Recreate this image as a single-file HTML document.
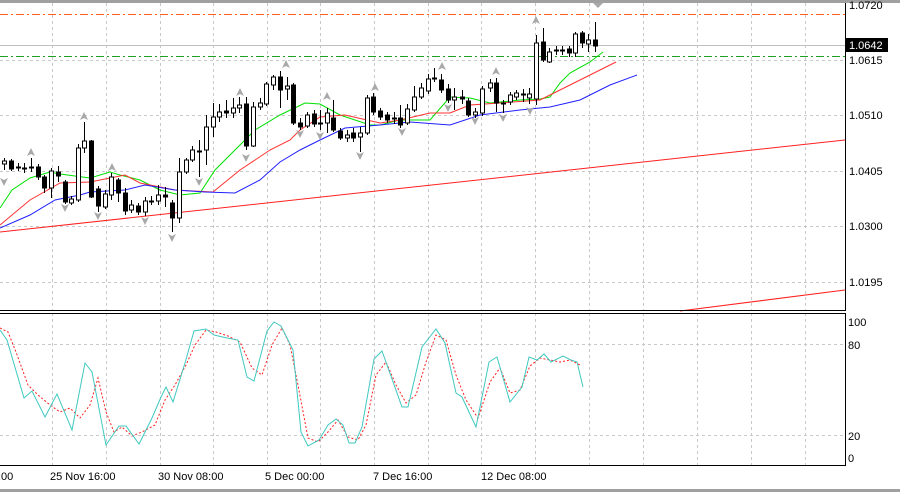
<!DOCTYPE html>
<html><head><style>
html,body{margin:0;padding:0;background:#fff;width:900px;height:492px;overflow:hidden}
svg text{font-family:"Liberation Sans",sans-serif;font-size:11px;fill:#000}
</style></head><body>
<svg width="900" height="492" viewBox="0 0 900 492" xmlns="http://www.w3.org/2000/svg">
<rect x="0" y="0" width="900" height="492" fill="#fff"/>
<rect x="0" y="0" width="900" height="3" fill="#a0a0a0"/>
<g stroke="#c8c8c8" stroke-dasharray="3,3" stroke-width="1">
<line x1="52.5" y1="3" x2="52.5" y2="310"/><line x1="106.5" y1="3" x2="106.5" y2="310"/><line x1="160.5" y1="3" x2="160.5" y2="310"/><line x1="213.5" y1="3" x2="213.5" y2="310"/><line x1="267.5" y1="3" x2="267.5" y2="310"/><line x1="320.5" y1="3" x2="320.5" y2="310"/><line x1="374.5" y1="3" x2="374.5" y2="310"/><line x1="428.5" y1="3" x2="428.5" y2="310"/><line x1="481.5" y1="3" x2="481.5" y2="310"/><line x1="535.5" y1="3" x2="535.5" y2="310"/><line x1="589.5" y1="3" x2="589.5" y2="310"/><line x1="643.5" y1="3" x2="643.5" y2="310"/><line x1="697.5" y1="3" x2="697.5" y2="310"/><line x1="751.5" y1="3" x2="751.5" y2="310"/><line x1="805.5" y1="3" x2="805.5" y2="310"/>
<line x1="52.5" y1="313" x2="52.5" y2="465"/><line x1="106.5" y1="313" x2="106.5" y2="465"/><line x1="160.5" y1="313" x2="160.5" y2="465"/><line x1="213.5" y1="313" x2="213.5" y2="465"/><line x1="267.5" y1="313" x2="267.5" y2="465"/><line x1="320.5" y1="313" x2="320.5" y2="465"/><line x1="374.5" y1="313" x2="374.5" y2="465"/><line x1="428.5" y1="313" x2="428.5" y2="465"/><line x1="481.5" y1="313" x2="481.5" y2="465"/><line x1="535.5" y1="313" x2="535.5" y2="465"/><line x1="589.5" y1="313" x2="589.5" y2="465"/><line x1="643.5" y1="313" x2="643.5" y2="465"/><line x1="697.5" y1="313" x2="697.5" y2="465"/><line x1="751.5" y1="313" x2="751.5" y2="465"/><line x1="805.5" y1="313" x2="805.5" y2="465"/>
<line x1="0" y1="115.5" x2="845" y2="115.5"/><line x1="0" y1="171.5" x2="845" y2="171.5"/><line x1="0" y1="226.5" x2="845" y2="226.5"/><line x1="0" y1="282.5" x2="845" y2="282.5"/><line x1="0" y1="60.5" x2="845" y2="60.5"/>
<line x1="0" y1="344.5" x2="845" y2="344.5"/><line x1="0" y1="435.5" x2="845" y2="435.5"/>
</g>
<line x1="0" y1="45.5" x2="845" y2="45.5" stroke="#c0c0c0"/>
<line x1="0" y1="14.5" x2="845" y2="14.5" stroke="#ff6020" stroke-dasharray="8,3,2,3"/>
<line x1="0" y1="56.5" x2="845" y2="56.5" stroke="#20a020" stroke-dasharray="8,3,2,3"/>
<line x1="0" y1="232" x2="845" y2="140" stroke="#ff2020"/>
<line x1="680" y1="311" x2="845" y2="290" stroke="#ff2020"/>
<polyline fill="none" stroke="#00e000" points="0,208 12,190 30,178 50,172 60,174 90,178 110,172 120,175 140,180 160,190 180,195 200,193 215,170 235,150 255,130 280,115 305,103 320,104 340,115 370,125 380,125 400,120 430,120 450,97 470,98 490,103 520,100 540,99 550,97 560,83 570,73 590,62 603,52"/>
<polyline fill="none" stroke="#ff3030" points="0,225 30,200 60,183 90,182 125,175 140,183 175,190 213,192 240,170 270,150 290,140 300,130 320,117 345,115 380,123 400,120 430,113 450,113 470,105 500,103 540,100 570,85 600,70 616,62"/>
<polyline fill="none" stroke="#2020ff" points="0,228 30,215 55,200 80,195 90,192 125,190 145,185 175,190 205,192 235,193 260,180 280,162 300,150 320,140 345,128 380,125 410,122 450,125 480,115 520,110 550,107 580,100 610,85 637,75"/>
<g id="candles" stroke="#000" stroke-width="1">
<!-- x, body top, body bottom, wick top, wick bottom, fill -->
<line x1="4.5" y1="158" x2="4.5" y2="170"/><rect x="2.5" y="161" width="4" height="3" fill="#fff"/>
<line x1="11.5" y1="159" x2="11.5" y2="171"/><rect x="9.5" y="161" width="4" height="8" fill="#000"/>
<line x1="18.5" y1="163" x2="18.5" y2="171"/><rect x="16.5" y="167" width="4" height="1" fill="#000"/>
<line x1="24.5" y1="163" x2="24.5" y2="173"/><rect x="22.5" y="168" width="4" height="1" fill="#000"/>
<line x1="31.5" y1="158" x2="31.5" y2="172"/><rect x="29.5" y="167" width="4" height="1" fill="#000"/>
<line x1="38.5" y1="164" x2="38.5" y2="180"/><rect x="36.5" y="167" width="4" height="10" fill="#000"/>
<line x1="44.5" y1="175" x2="44.5" y2="193"/><rect x="42.5" y="177" width="4" height="11" fill="#000"/>
<line x1="51.5" y1="168" x2="51.5" y2="198"/><rect x="49.5" y="171" width="4" height="17" fill="#fff"/>
<line x1="58.5" y1="166" x2="58.5" y2="182"/><rect x="56.5" y="172" width="4" height="4" fill="#000"/>
<line x1="65.5" y1="180" x2="65.5" y2="204"/><rect x="63.5" y="182" width="4" height="20" fill="#000"/>
<line x1="71.5" y1="196" x2="71.5" y2="205"/><rect x="69.5" y="199" width="4" height="4" fill="#fff"/>
<line x1="78.5" y1="144" x2="78.5" y2="202"/><rect x="76.5" y="148" width="4" height="52" fill="#fff"/>
<line x1="84.5" y1="122" x2="84.5" y2="153"/><rect x="82.5" y="141" width="4" height="7" fill="#fff"/>
<line x1="91.5" y1="140" x2="91.5" y2="198"/><rect x="89.5" y="141" width="4" height="56" fill="#000"/>
<line x1="98.5" y1="186" x2="98.5" y2="212"/><rect x="96.5" y="189" width="4" height="17" fill="#000"/>
<line x1="105.5" y1="190" x2="105.5" y2="209"/><rect x="103.5" y="194" width="4" height="13" fill="#fff"/>
<line x1="111.5" y1="173" x2="111.5" y2="200"/><rect x="109.5" y="177" width="4" height="18" fill="#fff"/>
<line x1="118.5" y1="178" x2="118.5" y2="202"/><rect x="116.5" y="180" width="4" height="13" fill="#000"/>
<line x1="125.5" y1="188" x2="125.5" y2="215"/><rect x="123.5" y="193" width="4" height="18" fill="#000"/>
<line x1="131.5" y1="200" x2="131.5" y2="213"/><rect x="129.5" y="205" width="4" height="5" fill="#fff"/>
<line x1="138.5" y1="203" x2="138.5" y2="215"/><rect x="136.5" y="206" width="4" height="6" fill="#000"/>
<line x1="145.5" y1="197" x2="145.5" y2="216"/><rect x="143.5" y="201" width="4" height="11" fill="#fff"/>
<line x1="151.5" y1="196" x2="151.5" y2="205"/><rect x="149.5" y="201" width="4" height="1" fill="#000"/>
<line x1="158.5" y1="185" x2="158.5" y2="205"/><rect x="156.5" y="195" width="4" height="6" fill="#fff"/>
<line x1="165.5" y1="187" x2="165.5" y2="207"/><rect x="163.5" y="195" width="4" height="2" fill="#000"/>
<line x1="172.5" y1="200" x2="172.5" y2="232"/><rect x="170.5" y="203" width="4" height="15" fill="#000"/>
<line x1="179.5" y1="158" x2="179.5" y2="223"/><rect x="177.5" y="172" width="4" height="46" fill="#fff"/>
<line x1="186.5" y1="158" x2="186.5" y2="174"/><rect x="184.5" y="160" width="4" height="12" fill="#fff"/>
<line x1="192.5" y1="146" x2="192.5" y2="162"/><rect x="190.5" y="150" width="4" height="10" fill="#fff"/>
<line x1="199.5" y1="140" x2="199.5" y2="177"/><rect x="197.5" y="151" width="4" height="1" fill="#000"/>
<line x1="206.5" y1="115" x2="206.5" y2="165"/><rect x="204.5" y="127" width="4" height="23" fill="#fff"/>
<line x1="213.5" y1="103" x2="213.5" y2="137"/><rect x="211.5" y="117" width="4" height="10" fill="#fff"/>
<line x1="219.5" y1="104" x2="219.5" y2="122"/><rect x="217.5" y="112" width="4" height="5" fill="#fff"/>
<line x1="226.5" y1="100" x2="226.5" y2="118"/><rect x="224.5" y="111" width="4" height="2" fill="#000"/>
<line x1="233.5" y1="98" x2="233.5" y2="118"/><rect x="231.5" y="108" width="4" height="5" fill="#fff"/>
<line x1="239.5" y1="97" x2="239.5" y2="113"/><rect x="237.5" y="105" width="4" height="3" fill="#fff"/>
<line x1="246.5" y1="97" x2="246.5" y2="150"/><rect x="244.5" y="104" width="4" height="42" fill="#000"/>
<line x1="253.5" y1="102" x2="253.5" y2="147"/><rect x="251.5" y="107" width="4" height="39" fill="#fff"/>
<line x1="260.5" y1="98" x2="260.5" y2="110"/><rect x="258.5" y="103" width="4" height="4" fill="#fff"/>
<line x1="266.5" y1="82" x2="266.5" y2="106"/><rect x="264.5" y="84" width="4" height="20" fill="#fff"/>
<line x1="273.5" y1="75" x2="273.5" y2="90"/><rect x="271.5" y="77" width="4" height="8" fill="#fff"/>
<line x1="280.5" y1="71" x2="280.5" y2="108"/><rect x="278.5" y="77" width="4" height="13" fill="#000"/>
<line x1="287.5" y1="77" x2="287.5" y2="100"/><rect x="285.5" y="86" width="4" height="3" fill="#fff"/>
<line x1="293.5" y1="83" x2="293.5" y2="125"/><rect x="291.5" y="85" width="4" height="38" fill="#000"/>
<line x1="300.5" y1="118" x2="300.5" y2="130"/><rect x="298.5" y="123" width="4" height="4" fill="#000"/>
<line x1="307.5" y1="112" x2="307.5" y2="128"/><rect x="305.5" y="115" width="4" height="11" fill="#fff"/>
<line x1="314.5" y1="110" x2="314.5" y2="127"/><rect x="312.5" y="114" width="4" height="10" fill="#000"/>
<line x1="320.5" y1="110" x2="320.5" y2="130"/><rect x="318.5" y="123" width="4" height="1" fill="#000"/>
<line x1="327.5" y1="108" x2="327.5" y2="133"/><rect x="325.5" y="113" width="4" height="10" fill="#fff"/>
<line x1="333.5" y1="100" x2="333.5" y2="132"/><rect x="331.5" y="118" width="4" height="12" fill="#000"/>
<line x1="340.5" y1="128" x2="340.5" y2="140"/><rect x="338.5" y="131" width="4" height="7" fill="#000"/>
<line x1="347.5" y1="130" x2="347.5" y2="142"/><rect x="345.5" y="135" width="4" height="3" fill="#fff"/>
<line x1="353.5" y1="128" x2="353.5" y2="142"/><rect x="351.5" y="133" width="4" height="5" fill="#000"/>
<line x1="360.5" y1="127" x2="360.5" y2="152"/><rect x="358.5" y="133" width="4" height="4" fill="#fff"/>
<line x1="367.5" y1="95" x2="367.5" y2="135"/><rect x="365.5" y="98" width="4" height="35" fill="#fff"/>
<line x1="373.5" y1="93" x2="373.5" y2="115"/><rect x="371.5" y="97" width="4" height="15" fill="#000"/>
<line x1="380.5" y1="108" x2="380.5" y2="120"/><rect x="378.5" y="111" width="4" height="6" fill="#000"/>
<line x1="387.5" y1="112" x2="387.5" y2="123"/><rect x="385.5" y="115" width="4" height="5" fill="#000"/>
<line x1="394.5" y1="112" x2="394.5" y2="124"/><rect x="392.5" y="118" width="4" height="1" fill="#000"/>
<line x1="400.5" y1="105" x2="400.5" y2="128"/><rect x="398.5" y="118" width="4" height="7" fill="#000"/>
<line x1="407.5" y1="104" x2="407.5" y2="125"/><rect x="405.5" y="109" width="4" height="14" fill="#fff"/>
<line x1="414.5" y1="86" x2="414.5" y2="112"/><rect x="412.5" y="97" width="4" height="13" fill="#fff"/>
<line x1="421.5" y1="83" x2="421.5" y2="99"/><rect x="419.5" y="88" width="4" height="9" fill="#fff"/>
<line x1="428.5" y1="74" x2="428.5" y2="94"/><rect x="426.5" y="79" width="4" height="12" fill="#fff"/>
<line x1="434.5" y1="68" x2="434.5" y2="82"/><rect x="432.5" y="78" width="4" height="1" fill="#000"/>
<line x1="441.5" y1="74" x2="441.5" y2="93"/><rect x="439.5" y="80" width="4" height="10" fill="#000"/>
<line x1="448.5" y1="84" x2="448.5" y2="103"/><rect x="446.5" y="89" width="4" height="11" fill="#000"/>
<line x1="454.5" y1="88" x2="454.5" y2="110"/><rect x="452.5" y="97" width="4" height="3" fill="#fff"/>
<line x1="462.5" y1="90" x2="462.5" y2="104"/><rect x="460.5" y="97" width="4" height="2" fill="#000"/>
<line x1="468.5" y1="98" x2="468.5" y2="117"/><rect x="466.5" y="101" width="4" height="14" fill="#000"/>
<line x1="475.5" y1="108" x2="475.5" y2="118"/><rect x="473.5" y="112" width="4" height="3" fill="#fff"/>
<line x1="482.5" y1="86" x2="482.5" y2="116"/><rect x="480.5" y="89" width="4" height="24" fill="#fff"/>
<line x1="490.5" y1="79" x2="490.5" y2="92"/><rect x="488.5" y="83" width="4" height="5" fill="#fff"/>
<line x1="496.5" y1="78" x2="496.5" y2="112"/><rect x="494.5" y="83" width="4" height="20" fill="#000"/>
<line x1="503.5" y1="100" x2="503.5" y2="113"/><rect x="501.5" y="103" width="4" height="1" fill="#000"/>
<line x1="510.5" y1="92" x2="510.5" y2="105"/><rect x="508.5" y="95" width="4" height="7" fill="#fff"/>
<line x1="516.5" y1="90" x2="516.5" y2="100"/><rect x="514.5" y="93" width="4" height="4" fill="#fff"/>
<line x1="523.5" y1="89" x2="523.5" y2="102"/><rect x="521.5" y="94" width="4" height="1" fill="#000"/>
<line x1="529.5" y1="88" x2="529.5" y2="104"/><rect x="527.5" y="94" width="4" height="4" fill="#fff"/>
<line x1="536.5" y1="35" x2="536.5" y2="105"/><rect x="534.5" y="43" width="4" height="56" fill="#fff"/>
<line x1="543.5" y1="28" x2="543.5" y2="62"/><rect x="541.5" y="42" width="4" height="18" fill="#000"/>
<line x1="549.5" y1="48" x2="549.5" y2="63"/><rect x="547.5" y="52" width="4" height="10" fill="#fff"/>
<line x1="556.5" y1="46" x2="556.5" y2="55"/><rect x="554.5" y="50" width="4" height="1" fill="#000"/>
<line x1="562.5" y1="46" x2="562.5" y2="55"/><rect x="560.5" y="50" width="4" height="1" fill="#000"/>
<line x1="569.5" y1="46" x2="569.5" y2="57"/><rect x="567.5" y="49" width="4" height="4" fill="#000"/>
<line x1="575.5" y1="32" x2="575.5" y2="57"/><rect x="573.5" y="34" width="4" height="19" fill="#fff"/>
<line x1="582.5" y1="31" x2="582.5" y2="48"/><rect x="580.5" y="33" width="4" height="10" fill="#000"/>
<line x1="588.5" y1="34" x2="588.5" y2="52"/><rect x="586.5" y="40" width="4" height="4" fill="#fff"/>
<line x1="595.5" y1="22" x2="595.5" y2="52"/><rect x="593.5" y="40" width="4" height="6" fill="#000"/>
</g>
<g fill="#a8a8a8">
<path d="M31,148 l-4,8 l4,-2 l4,2z"/><path d="M84,112 l-4,8 l4,-2 l4,2z"/><path d="M112,163 l-4,8 l4,-2 l4,2z"/><path d="M240,88 l-4,8 l4,-2 l4,2z"/><path d="M286,60 l-4,8 l4,-2 l4,2z"/><path d="M327,92 l-4,8 l4,-2 l4,2z"/><path d="M375,83 l-4,8 l4,-2 l4,2z"/><path d="M442,62 l-4,8 l4,-2 l4,2z"/><path d="M496,67 l-4,8 l4,-2 l4,2z"/><path d="M536,16 l-4,8 l4,-2 l4,2z"/>
<path d="M4,186 l-4,-8 l4,2 l4,-2z"/><path d="M65,212 l-4,-8 l4,2 l4,-2z"/><path d="M98,220 l-4,-8 l4,2 l4,-2z"/><path d="M145,225 l-4,-8 l4,2 l4,-2z"/><path d="M172,242 l-4,-8 l4,2 l4,-2z"/><path d="M199,186 l-4,-8 l4,2 l4,-2z"/><path d="M246,162 l-4,-8 l4,2 l4,-2z"/><path d="M300,138 l-4,-8 l4,2 l4,-2z"/><path d="M320,140 l-4,-8 l4,2 l4,-2z"/><path d="M360,160 l-4,-8 l4,2 l4,-2z"/><path d="M402,136 l-4,-8 l4,2 l4,-2z"/><path d="M448,112 l-4,-8 l4,2 l4,-2z"/><path d="M475,125 l-4,-8 l4,2 l4,-2z"/><path d="M503,122 l-4,-8 l4,2 l4,-2z"/><path d="M530,115 l-4,-8 l4,2 l4,-2z"/><path d="M598,8 l-5,-5 l10,0z"/>
</g>
<line x1="845.5" y1="3" x2="845.5" y2="310" stroke="#000"/>
<line x1="0" y1="310.5" x2="846" y2="310.5" stroke="#000"/>
<line x1="0" y1="313.5" x2="846" y2="313.5" stroke="#000"/>
<line x1="845.5" y1="313" x2="845.5" y2="465" stroke="#000"/>
<line x1="0" y1="465.5" x2="846" y2="465.5" stroke="#000"/>
<polyline fill="none" stroke="#ff2020" stroke-dasharray="2,2" points="0,328 8,332 16,352 28,385 38,395 50,405 60,412 70,408 80,418 90,405 98,378 106,412 114,432 122,427 132,436 142,432 155,425 165,400 175,385 186,365 195,345 206,330 216,332 228,336 240,342 252,368 262,375 272,345 282,328 290,345 298,385 308,438 318,442 328,432 338,420 348,437 358,440 366,425 376,375 386,362 396,385 406,403 416,395 426,362 436,335 446,340 456,375 466,400 478,418 490,382 500,368 510,393 520,390 530,366 540,358 550,360 560,362 570,360 580,365"/>
<polyline fill="none" stroke="#40c8c0" points="0,330 7,340 24,398 32,391 45,417 57,394 72,430 85,363 92,372 106,445 119,426 126,426 139,444 152,418 161,397 166,387 173,402 185,363 194,331 206,329 214,335 227,338 238,340 247,377 254,381 267,331 274,322 281,326 293,350 301,432 308,446 319,440 328,425 336,419 343,425 349,443 355,443 362,427 374,359 382,351 402,407 408,407 422,347 436,329 445,343 456,393 462,397 476,427 489,362 497,357 510,402 522,387 529,357 537,360 544,354 551,362 563,356 571,360 577,362 583,387"/>
<rect x="846" y="38" width="42" height="14" fill="#000"/>
<text x="849" y="9">1.0720</text>
<text x="849" y="49" style="fill:#fff">1.0642</text>
<text x="849" y="64">1.0615</text>
<text x="849" y="119">1.0510</text>
<text x="849" y="175">1.0405</text>
<text x="849" y="230">1.0300</text>
<text x="849" y="286">1.0195</text>
<text x="848" y="326">100</text>
<text x="848" y="349">80</text>
<text x="848" y="440">20</text>
<text x="848" y="462">0</text>
<text x="-2" y="480">:00</text>
<text x="50" y="480">25 Nov 16:00</text>
<text x="158" y="480">30 Nov 08:00</text>
<text x="265" y="480">5 Dec 00:00</text>
<text x="373" y="480">7 Dec 16:00</text>
<text x="481" y="480">12 Dec 08:00</text>
<rect x="0" y="489" width="900" height="3" fill="#a0a0a0"/>
</svg>
</body></html>
